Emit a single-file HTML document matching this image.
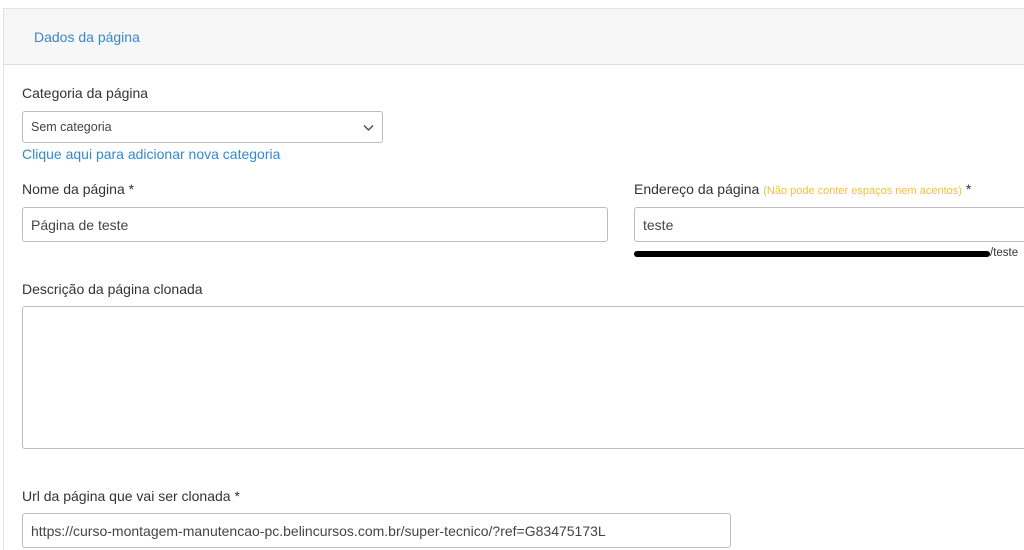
<!DOCTYPE html>
<html><head><meta charset="utf-8"><style>
*{box-sizing:border-box;margin:0;padding:0}
html,body{width:1024px;height:550px;overflow:hidden;background:#fff}
body{font-family:"Liberation Sans",sans-serif;color:#333;position:relative}
.panel{position:absolute;left:3px;top:8px;width:1021px;height:542px;border:1px solid #e3e3e3;border-right:none;border-bottom:none;border-radius:3px 0 0 0}
.hdr{position:absolute;left:3px;top:8px;width:1021px;height:57px;background:#f7f7f7;border:1px solid #e3e3e3;border-right:none;border-bottom-color:#dcdcdc}
.hdr span{position:absolute;left:30px;top:20px;font-size:14px;color:#3a87c8}
.a{position:absolute;white-space:nowrap}
.lbl{font-size:14px;color:#333}
.in{position:absolute;border:1px solid #bdbdbd;border-radius:3px;background:#fff;font-size:14px;color:#444;padding-left:8px;display:flex;align-items:center;overflow:hidden}
</style></head><body>
<div class="panel"></div>
<div class="hdr"><span>Dados da página</span></div>
<div class="a lbl" style="left:22px;top:85px">Categoria da página</div>
<div class="in" style="left:22px;top:111px;width:361px;height:32px;font-size:12.5px">Sem categoria
<svg style="position:absolute;right:8px;top:12px" width="11" height="8" viewBox="0 0 11 8"><path d="M1 1.5l4.5 4.5 4.5-4.5" stroke="#555" stroke-width="1.5" fill="none"/></svg></div>
<div class="a" style="left:22px;top:146px;font-size:14px;color:#3a87c8">Clique aqui para adicionar nova categoria</div>
<div class="a lbl" style="left:22px;top:181px">Nome da página *</div>
<div class="in" style="left:22px;top:207px;width:586px;height:35px">Página de teste</div>
<div class="a lbl" style="left:634px;top:181px">Endereço da página <span style="font-size:11px;color:#f0c040">(Não pode conter espaços nem acentos)</span> *</div>
<div class="in" style="left:634px;top:207px;width:390px;height:35px;border-right:none;border-radius:3px 0 0 3px">teste</div>
<div class="a" style="left:634px;top:251px;width:356px;height:6px;background:#000;border-radius:3px"></div>
<div class="a" style="left:990px;top:247px;font-size:11.5px;color:#333">/teste</div>
<div class="a lbl" style="left:22px;top:281px">Descrição da página clonada</div>
<div class="in" style="left:22px;top:306px;width:1002px;height:143px;border-right:none;border-radius:3px 0 0 3px"></div>
<div class="a lbl" style="left:22px;top:488px">Url da página que vai ser clonada *</div>
<div class="in" style="left:22px;top:513px;width:709px;height:35px">https://curso-montagem-manutencao-pc.belincursos.com.br/super-tecnico/?ref=G83475173L</div>
</body></html>
